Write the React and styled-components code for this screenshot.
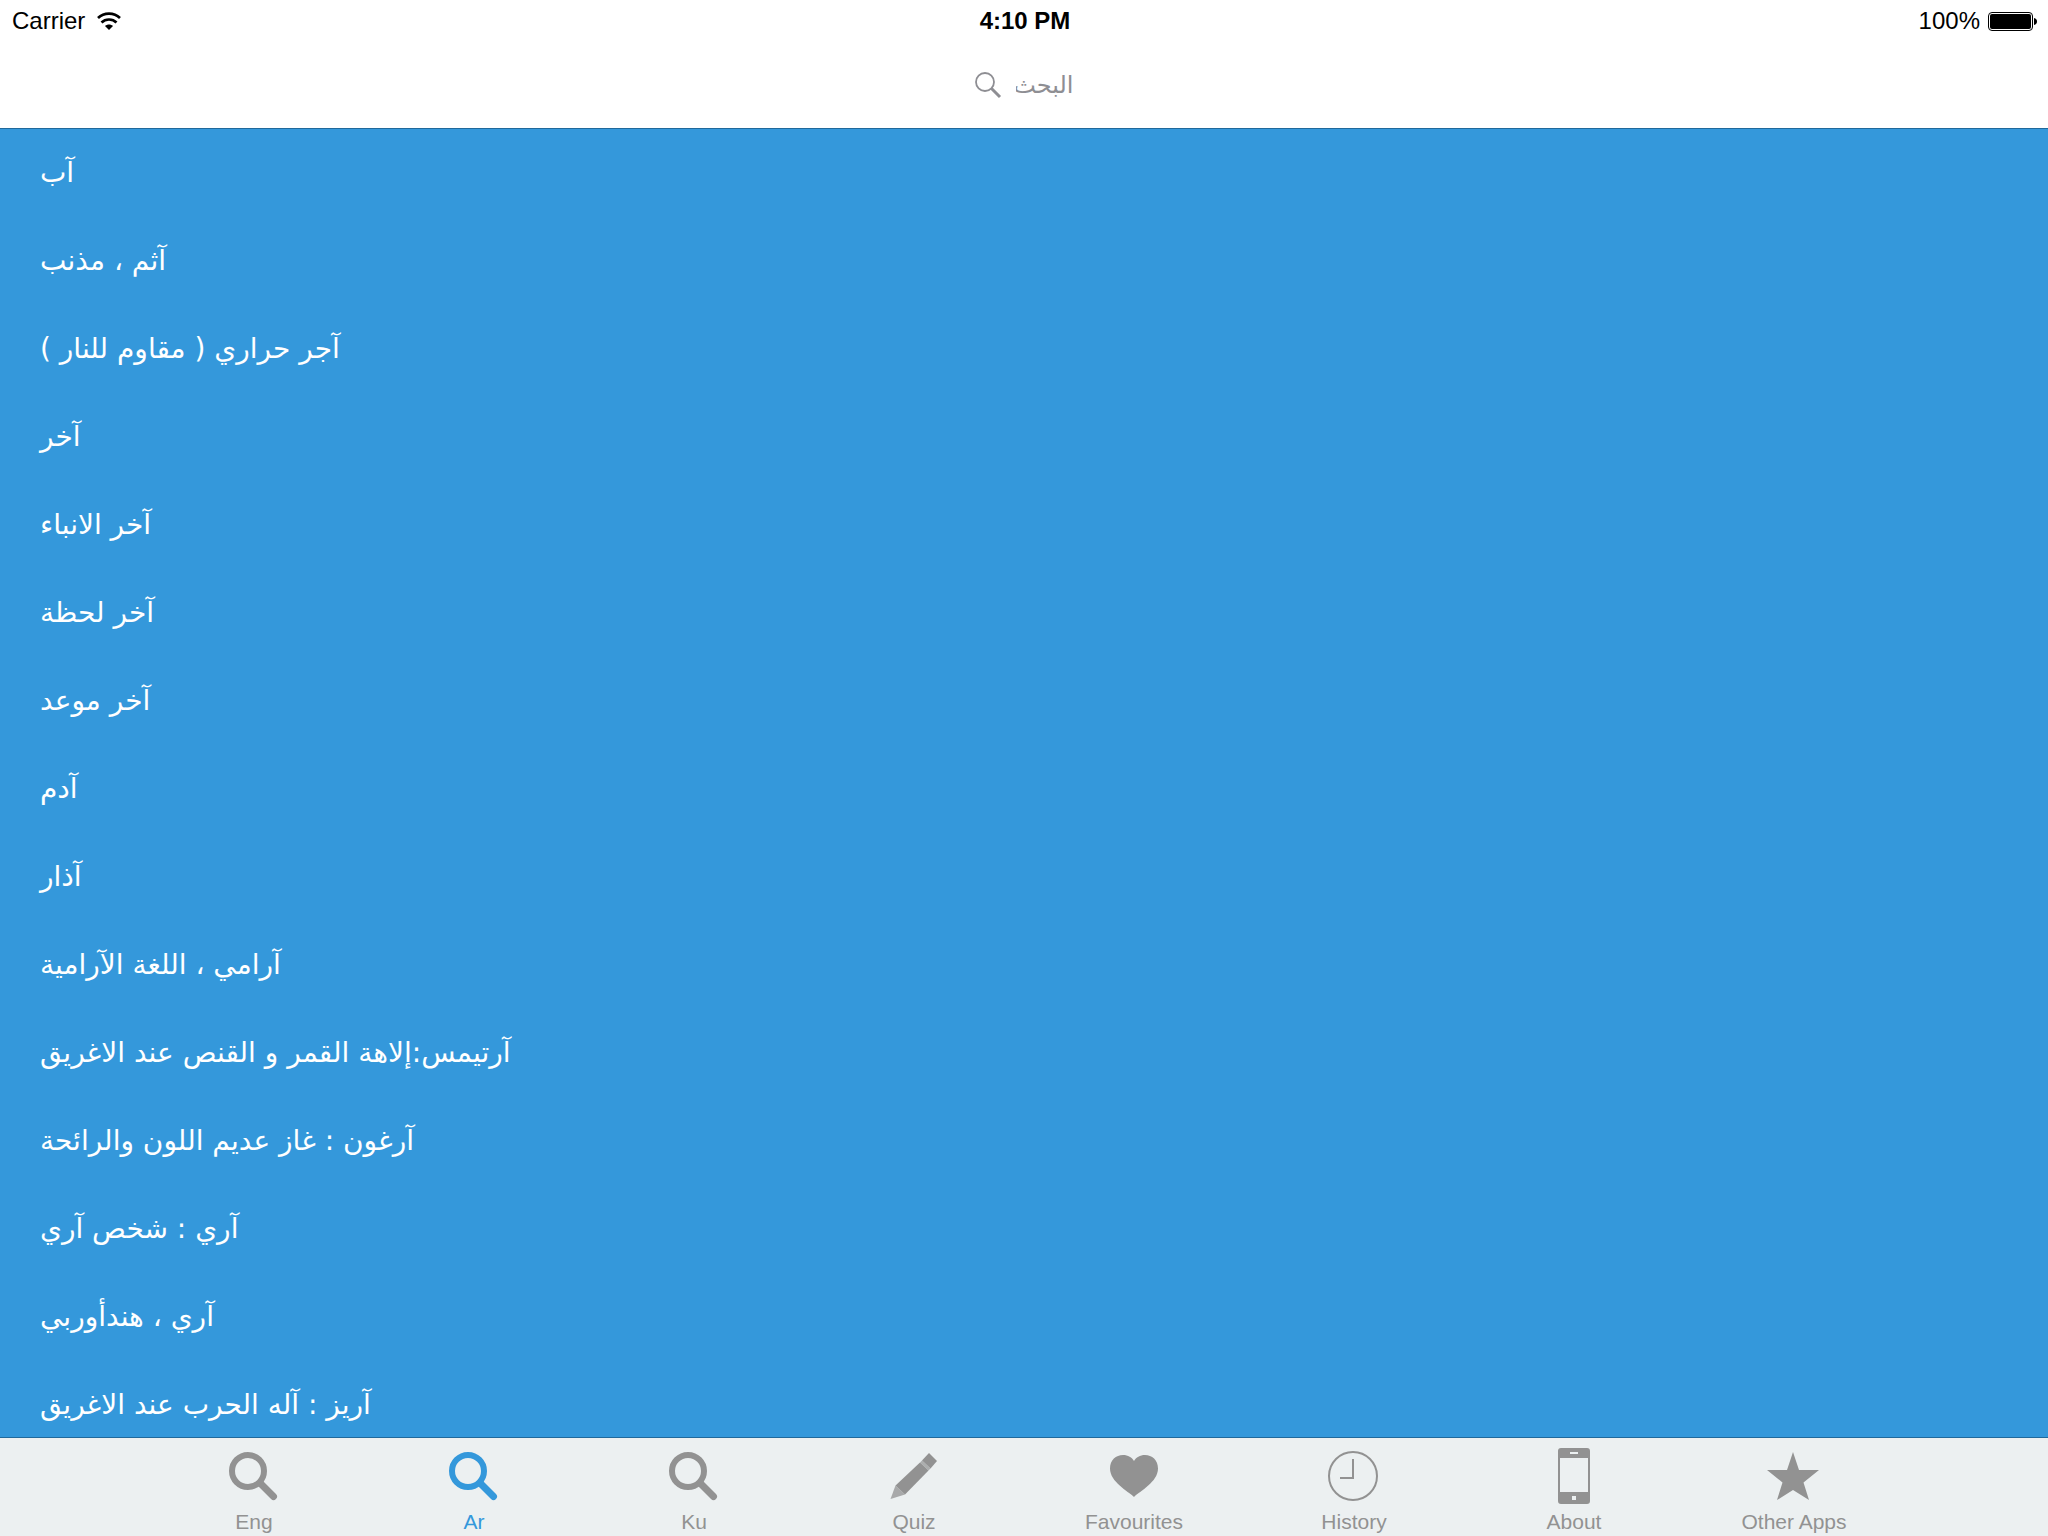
import { useState } from "react";
import styled, { createGlobalStyle } from "styled-components";

const GlobalStyle = createGlobalStyle`
    * {
        box-sizing: border-box;
    }

    body {
        margin: 0;
        background: #fff;
        font-family: "Liberation Sans", Arial, sans-serif;
    }

    button,
    input {
        margin: 0;
        padding: 0;
        border: 0;
        background: none;
        font-family: inherit;
    }
`;

const Screen = styled.div`
    display: flex;
    flex-direction: column;
    height: 100vh;
`;

const Header = styled.header`
    border-bottom: 1px solid #20699b;
    background: #fff;
`;

const StatusBar = styled.div`
    display: grid;
    grid-template-columns: 1fr auto 1fr;
    align-items: center;
    height: 42px;
    padding: 0 10px 0 12px;
    color: #000;
    font-size: 24px;
    line-height: 28px;
`;

const StatusGroup = styled.div`
    display: flex;
    align-items: center;
    justify-content: ${({ $end }) => ($end ? "flex-end" : "flex-start")};
    gap: ${({ $end }) => ($end ? "8px" : "12px")};
`;

const Time = styled.span`
    font-weight: 700;
`;

const SearchBar = styled.label`
    display: flex;
    align-items: center;
    justify-content: center;
    gap: 14px;
    height: 86px;
    color: #8e8e93;
`;

const SearchInput = styled.input`
    width: 58px;
    height: 44px;
    color: #000;
    font-family: "DejaVu Sans", sans-serif;
    font-size: 24px;
    outline: none;

    &::placeholder {
        color: #8e8e93;
        opacity: 1;
    }
`;

const WordList = styled.ul`
    flex: 1;
    min-height: 0;
    margin: 0;
    padding: 0;
    overflow: hidden;
    background: #3498db;
    list-style: none;
`;

const WordRow = styled.button`
    display: block;
    width: 100%;
    height: 88px;
    padding: 0 40px;
    color: #fff;
    font-family: "DejaVu Sans", sans-serif;
    font-size: 28px;
    line-height: 88px;
    text-align: left;
    white-space: nowrap;
`;

const TabBar = styled.nav`
    display: flex;
    justify-content: center;
    height: 99px;
    border-top: 1px solid #20699b;
    background: #ecf0f1;
`;

const Tab = styled.button`
    display: flex;
    flex: 0 1 220px;
    flex-direction: column;
    align-items: center;
    padding-top: 8px;
    color: ${({ $active }) => ($active ? "#3498db" : "#929292")};
    font-size: 21px;
    line-height: 24px;

    svg {
        margin-bottom: 4px;
    }
`;

function WifiIcon() {
    return (
        <svg width="24" height="18" viewBox="0 0 24 18">
            <g fill="none" stroke="#000" strokeWidth="2.7">
                <path d="M1 6C7 .2 17 .2 23 6" />
                <path d="M4.500 10.500c4-4 11-4 15 0" />
            </g>
            <path d="M8 14c2.400-2 5.600-2 8 0l-4 4z" />
        </svg>
    );
}

function BatteryIcon() {
    return (
        <svg width="50" height="19" viewBox="0 0 50 19">
            <rect x=".5" y=".5" width="44" height="18" rx="3.5" fill="none" stroke="#000" />
            <rect x="2" y="2" width="41" height="15" rx="2" />
            <path d="M46 6c4 .8 4 6.200 0 7z" />
        </svg>
    );
}

function SearchIcon() {
    return (
        <svg width="27" height="27" viewBox="0 0 27 27" fill="none" stroke="currentColor">
            <circle cx="10" cy="10" r="9" strokeWidth="1.8" />
            <path d="M16.500 16.500l8.500 8.500" strokeWidth="3" />
        </svg>
    );
}

function MagnifierIcon() {
    return (
        <g fill="none" stroke="currentColor">
            <circle cx="24" cy="25" r="16" strokeWidth="6" />
            <path d="M37 38l12.500 12.500" strokeWidth="7" strokeLinecap="round" />
        </g>
    );
}

function PencilIcon() {
    return (
        <g fill="currentColor">
            <path d="M45 7l8 8-6.500 7.500-8.500-8z" />
            <path d="M36 16.500l2-2 8.500 8-2 2z" opacity=".7" />
            <path d="M36 16.500l8.500 8L21 48.500l-9.500-9z" />
            <path d="M11.500 39.500l9.500 9L6.500 53z" opacity=".75" />
        </g>
    );
}

function HeartIcon() {
    return (
        <path
            d="M30 51C24 45 6 36 6 22.500 6 14 12 9 19 9c5 0 9 2.500 11 6 2-3.500 6-6 11-6 7 0 13 5 13 13.500C54 36 36 45 30 51z"
            fill="currentColor"
        />
    );
}

function ClockIcon() {
    return (
        <g fill="none" stroke="currentColor" strokeWidth="2">
            <circle cx="29" cy="30" r="24" />
            <path d="M29 13v19H16" />
        </g>
    );
}

function PhoneIcon() {
    return (
        <path
            d="M17 2h26a3 3 0 0 1 3 3v50a3 3 0 0 1-3 3H17a3 3 0 0 1-3-3V5a3 3 0 0 1 3-3zM16 12v34h28V12zM26 6v2h8V6zM28 50v4h4v-4z"
            fill="currentColor"
            fillRule="evenodd"
        />
    );
}

function StarIcon() {
    return (
        <path
            d="M29 6l6 18h20L39.500 36.500 45 54 29 44 13 54l5.500-17.500L3 24h20z"
            fill="currentColor"
        />
    );
}

const words = [
    "آب",
    "آثم ، مذنب",
    "آجر حراري ( مقاوم للنار )",
    "آخر",
    "آخر الانباء",
    "آخر لحظة",
    "آخر موعد",
    "آدم",
    "آذار",
    "آرامي ، اللغة الآرامية",
    "آرتيمس:إلاهة القمر و القنص عند الاغريق",
    "آرغون : غاز عديم اللون والرائحة",
    "آري : شخص آري",
    "آري ، هندأوربي",
    "آريز : آله الحرب عند الاغريق",
];

const tabs = [
    { label: "Eng", Icon: MagnifierIcon },
    { label: "Ar", Icon: MagnifierIcon },
    { label: "Ku", Icon: MagnifierIcon },
    { label: "Quiz", Icon: PencilIcon },
    { label: "Favourites", Icon: HeartIcon },
    { label: "History", Icon: ClockIcon },
    { label: "About", Icon: PhoneIcon },
    { label: "Other Apps", Icon: StarIcon },
];

function App() {
    const [active, setActive] = useState("Ar");
    const [query, setQuery] = useState("");

    return (
        <Screen>
            <GlobalStyle />
            <Header>
                <StatusBar>
                    <StatusGroup>
                        <span>Carrier</span>
                        <WifiIcon />
                    </StatusGroup>
                    <Time>4:10 PM</Time>
                    <StatusGroup $end>
                        <span>100%</span>
                        <BatteryIcon />
                    </StatusGroup>
                </StatusBar>
                <SearchBar>
                    <SearchIcon />
                    <SearchInput
                        type="text"
                        dir="rtl"
                        placeholder="البحث"
                        value={query}
                        onChange={(e) => setQuery(e.target.value)}
                    />
                </SearchBar>
            </Header>
            <WordList>
                {words
                    .filter((word) => word.includes(query))
                    .map((word) => (
                        <li key={word}>
                            <WordRow type="button" dir="rtl" lang="ar">
                                {word}
                            </WordRow>
                        </li>
                    ))}
            </WordList>
            <TabBar>
                {tabs.map(({ label, Icon }) => (
                    <Tab
                        key={label}
                        type="button"
                        $active={label === active}
                        onClick={() => setActive(label)}
                    >
                        <svg width="60" height="60" viewBox="0 0 60 60">
                            <Icon />
                        </svg>
                        {label}
                    </Tab>
                ))}
            </TabBar>
        </Screen>
    );
}

export default App;
